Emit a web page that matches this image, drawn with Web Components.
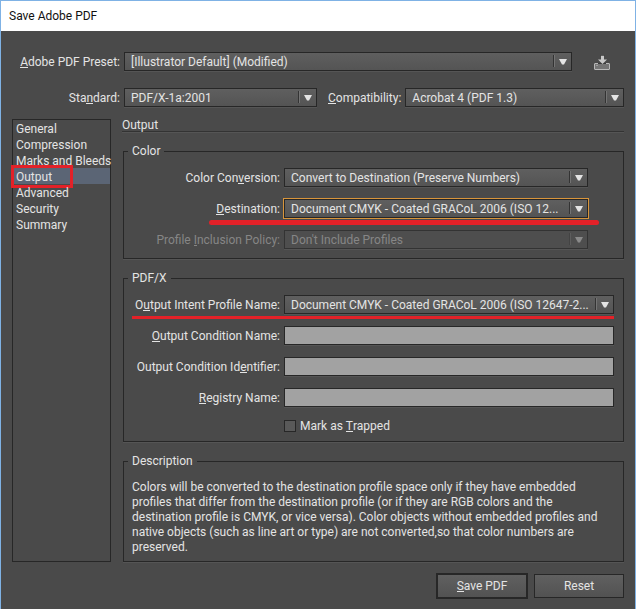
<!DOCTYPE html>
<html lang="en">
<head>
<meta charset="utf-8">
<title>Save Adobe PDF</title>
<style>
body {
  margin: 0;
  font: 12px/16px Roboto, sans-serif;
  color: #e4e4e4;
}
.row {
  display: grid;
  gap: 11px;
}
.preset {
  grid-template-columns: 1fr auto;
  gap: 16px;
}
.standard {
  grid-template-columns: 305fr 296fr;
}
.main {
  display: grid;
  grid-template-columns: 99px 1fr;
  gap: 12px;
  flex: 1;
}
.top { --label-width: 108px; }
.group { --label-width: 148px; }
.narrow { margin-right: 26px; }
p { margin: 0; line-height: 15px; }
</style>
</head>
<body>

<dialog-window heading="Save Adobe PDF">
  <div class="row preset">
    <select-field class="top" label="_Adobe PDF Preset:" value="[Illustrator Default] (Modified)"></select-field>
    <save-preset></save-preset>
  </div>
  <div class="row standard">
    <select-field class="top" label="Sta_ndard:" value="PDF/X-1a:2001"></select-field>
    <select-field label="_Compatibility:" value="Acrobat 4 (PDF 1.3)"></select-field>
  </div>
  <div class="main">
    <category-list items="General,Compression,Marks and Bleeds,Output,Advanced,Security,Summary" current="Output"></category-list>
    <options-panel heading="Output">
      <group-box class="group" heading="Color">
        <select-field class="narrow" label="Color Con_version:" value="Convert to Destination (Preserve Numbers)"></select-field>
        <select-field class="narrow" focused marker="round" label="_Destination:" value="Document CMYK - Coated GRACoL 2006 (ISO 12..."></select-field>
        <select-field class="narrow" disabled label="Profile _Inclusion Policy:" value="Don't Include Profiles"></select-field>
      </group-box>
      <group-box class="group" heading="PDF/X">
        <select-field marker="flat" label="O_utput Intent Profile Name:" value="Document CMYK - Coated GRACoL 2006 (ISO 12647-2..."></select-field>
        <text-field label="_Output Condition Name:"></text-field>
        <text-field label="Output Condition Id_entifier:"></text-field>
        <text-field label="_Registry Name:"></text-field>
        <check-field label="Mark as _Trapped"></check-field>
      </group-box>
      <group-box class="text" heading="Description">
        <p>Colors will be converted to the destination profile space only if they have embedded profiles that differ from the destination profile (or if they are RGB colors and the destination profile is CMYK, or vice versa). Color objects without embedded profiles and native objects (such as line art or type) are not converted,so that color numbers are preserved.</p>
      </group-box>
    </options-panel>
  </div>
  <push-button slot="actions" primary label="_Save PDF"></push-button>
  <push-button slot="actions" label="Reset"></push-button>
</dialog-window>

<script>
// "_" in a label goes before its access key letter
function mnemonic(text) {
  return text.replace(/_(.)/, '<u>$1</u>');
}

const shared = `
  * { box-sizing: border-box; }
  u {
    text-decoration: none;
    display: inline-block;
    line-height: 10px;
    border-bottom: 1px solid;
  }
  label { white-space: nowrap; }
`;

const fieldStyle = `
  ${shared}
  :host {
    display: grid;
    grid-template-columns: var(--label-width, auto) 1fr;
    gap: 4px;
    align-items: center;
    height: 19px;
    position: relative;
  }
  label { text-align: right; }
`;

class DialogWindow extends HTMLElement {
  constructor() {
    super();
    this.attachShadow({mode: 'open'}).innerHTML = `
      <style>
        * { box-sizing: border-box; }
        :host {
          display: flex;
          flex-direction: column;
          box-sizing: border-box;
          min-height: 100vh;
          border: 1px solid #7fb2e5;
          background: #4a4a4a;
        }
        header {
          height: 30px;
          padding: 0 8px;
          background: #fff;
          color: #111;
          font: 12px/30px Roboto, sans-serif;
        }
        main {
          flex: 1;
          display: flex;
          flex-direction: column;
          padding: 21px 11px 11px;
        }
        slot { display: contents; }
        ::slotted(.preset) { margin-bottom: 17px; }
        ::slotted(.standard) { margin-bottom: 12px; }
        footer {
          display: flex;
          justify-content: flex-end;
          align-items: center;
          gap: 6px;
          padding: 0 11px 10px;
        }
      </style>
      <header>${this.getAttribute('heading')}</header>
      <main><slot></slot></main>
      <footer><slot name="actions"></slot></footer>`;
  }
}

class SelectField extends HTMLElement {
  constructor() {
    super();
    const disabled = this.hasAttribute('disabled') ? 'disabled' : '';
    this.attachShadow({mode: 'open'}).innerHTML = `
      <style>
        ${fieldStyle}
        .box {
          display: grid;
          grid-template-columns: 1fr 26px;
          min-width: 0;
        }
        select {
          grid-area: 1 / 1 / 2 / 3;
          appearance: none;
          width: 100%;
          height: 19px;
          margin: 0;
          padding: 0 22px 0 6px;
          border: 1px solid #272727;
          border-radius: 0;
          outline: none;
          background: linear-gradient(#5f5f5f, #545454);
          box-shadow: 0 1px #555;
          color: inherit;
          font: inherit;
          line-height: 16px;
        }
        svg {
          grid-area: 1 / 2;
          width: 26px;
          height: 19px;
          pointer-events: none;
        }
        :host([focused]) select { outline: 1px solid #d8953b; }
        :host([disabled]) { color: #868686; }
        :host([disabled]) select {
          border-color: #333;
          background: #4e4e4e;
          opacity: 1;
        }
        :host([disabled]) svg { opacity: 0.4; }
        .marker { position: absolute; background: #e32128; }
        :host([marker="round"]) .marker {
          left: 77px;
          right: -11px;
          top: 21px;
          height: 5px;
          border-radius: 3px;
        }
        :host([marker="flat"]) .marker {
          left: 0;
          right: 0;
          top: 21px;
          height: 3px;
        }
      </style>
      <label for="field">${mnemonic(this.getAttribute('label'))}</label>
      <div class="box">
        <select id="field" ${disabled}><option>${this.getAttribute('value')}</option></select>
        <svg viewBox="0 0 26 19">
          <path d="M7.500 3v12" stroke="#333"/>
          <path d="M8.500 3v12" stroke="#747474"/>
          <path d="M13 7h8l-3 5.500h-2z" fill="#e4e4e4"/>
        </svg>
      </div>
      <div class="marker"></div>`;
  }
}

class TextField extends HTMLElement {
  constructor() {
    super();
    this.attachShadow({mode: 'open'}).innerHTML = `
      <style>
        ${fieldStyle}
        input {
          width: 100%;
          height: 19px;
          margin: 0;
          padding: 0 6px;
          border: 1px solid #272727;
          background: #a2a2a2;
          box-shadow: 0 1px #555;
          font: inherit;
        }
      </style>
      <label for="field">${mnemonic(this.getAttribute('label'))}</label>
      <input id="field" type="text">`;
  }
}

class CheckField extends HTMLElement {
  constructor() {
    super();
    this.attachShadow({mode: 'open'}).innerHTML = `
      <style>
        ${shared}
        :host {
          display: flex;
          align-items: center;
          gap: 4px;
          height: 13px;
          padding-left: calc(var(--label-width) + 4px);
        }
        input {
          appearance: none;
          width: 12px;
          height: 12px;
          margin: 0;
          border: 1px solid #272727;
          background: #595959;
        }
      </style>
      <input id="field" type="checkbox">
      <label for="field">${mnemonic(this.getAttribute('label'))}</label>`;
  }
}

class CategoryList extends HTMLElement {
  constructor() {
    super();
    const current = this.getAttribute('current');
    const links = this.getAttribute('items').split(',').map(item =>
      `<a href="#"${item === current ? ' aria-current="page"' : ''}>${item}</a>`);
    this.attachShadow({mode: 'open'}).innerHTML = `
      <style>
        :host {
          display: block;
          border: 1px solid #272727;
        }
        a {
          display: block;
          position: relative;
          height: 16px;
          padding-left: 3px;
          color: inherit;
          line-height: 18px;
          text-decoration: none;
          white-space: nowrap;
        }
        a[aria-current] { background: #5b6575; }
        a[aria-current]::after {
          content: '';
          position: absolute;
          left: -2px;
          top: -3px;
          width: 56px;
          height: 17px;
          border: 3px solid #e32128;
        }
      </style>
      <nav>${links.join('')}</nav>`;
  }
}

class OptionsPanel extends HTMLElement {
  constructor() {
    super();
    this.attachShadow({mode: 'open'}).innerHTML = `
      <style>
        :host {
          display: flex;
          flex-direction: column;
          gap: 11px;
          min-width: 0;
        }
        h2 {
          margin: -3px 0 0 -1px;
          height: 15px;
          border-bottom: 1px solid #333;
          box-shadow: 0 1px #555;
          font: inherit;
          line-height: 18px;
        }
      </style>
      <h2>${this.getAttribute('heading')}</h2>
      <slot></slot>`;
  }
}

class GroupBox extends HTMLElement {
  constructor() {
    super();
    this.attachShadow({mode: 'open'}).innerHTML = `
      <style>
        :host { display: block; }
        fieldset {
          display: flex;
          flex-direction: column;
          gap: 12px;
          min-width: 0;
          margin: 0;
          padding: 9px 9px 9px 8px;
          border: 1px solid #272727;
          box-shadow: 0 1px #555;
        }
        legend {
          margin-left: -4px;
          padding: 0 4px;
          height: 16px;
        }
        :host(.text) fieldset { padding: 11px 9px 6px 8px; }
      </style>
      <fieldset>
        <legend>${this.getAttribute('heading')}</legend>
        <slot></slot>
      </fieldset>`;
  }
}

class SavePreset extends HTMLElement {
  constructor() {
    super();
    this.attachShadow({mode: 'open'}).innerHTML = `
      <style>
        :host { display: block; margin-right: 8px; }
        button {
          display: grid;
          place-items: center;
          width: 28px;
          height: 19px;
          padding: 2px 0 0;
          border: 0;
          background: none;
        }
        svg { display: block; width: 16px; height: 16px; }
      </style>
      <button aria-label="Save preset">
        <svg viewBox="0 0 16 16">
          <rect x=".5" y="8.500" width="15" height="6" rx=".5" fill="#757575" stroke="#b8b8b8"/>
          <path d="M4 8.500h8" stroke="#3a3a3a"/>
          <path d="M2.500 10.500h1" stroke="#c8c8c8"/>
          <path d="M7 .5h3v4h3L8.500 9 4 4.500h3z" fill="#c8c8c8"/>
          <path d="M6.500 0h4" stroke="#333"/>
        </svg>
      </button>`;
  }
}

class PushButton extends HTMLElement {
  constructor() {
    super();
    this.attachShadow({mode: 'open'}).innerHTML = `
      <style>
        ${shared}
        :host { display: block; }
        button {
          display: block;
          width: 90px;
          height: 24px;
          padding: 0;
          border: 1px solid #272727;
          background: linear-gradient(#606060, #525252);
          color: inherit;
          font: inherit;
        }
        :host([primary]) button {
          width: 92px;
          height: 26px;
          border-width: 2px;
        }
      </style>
      <button>${mnemonic(this.getAttribute('label'))}</button>`;
  }
}

customElements.define('dialog-window', DialogWindow);
customElements.define('select-field', SelectField);
customElements.define('text-field', TextField);
customElements.define('check-field', CheckField);
customElements.define('category-list', CategoryList);
customElements.define('options-panel', OptionsPanel);
customElements.define('group-box', GroupBox);
customElements.define('save-preset', SavePreset);
customElements.define('push-button', PushButton);
</script>
</body>
</html>
